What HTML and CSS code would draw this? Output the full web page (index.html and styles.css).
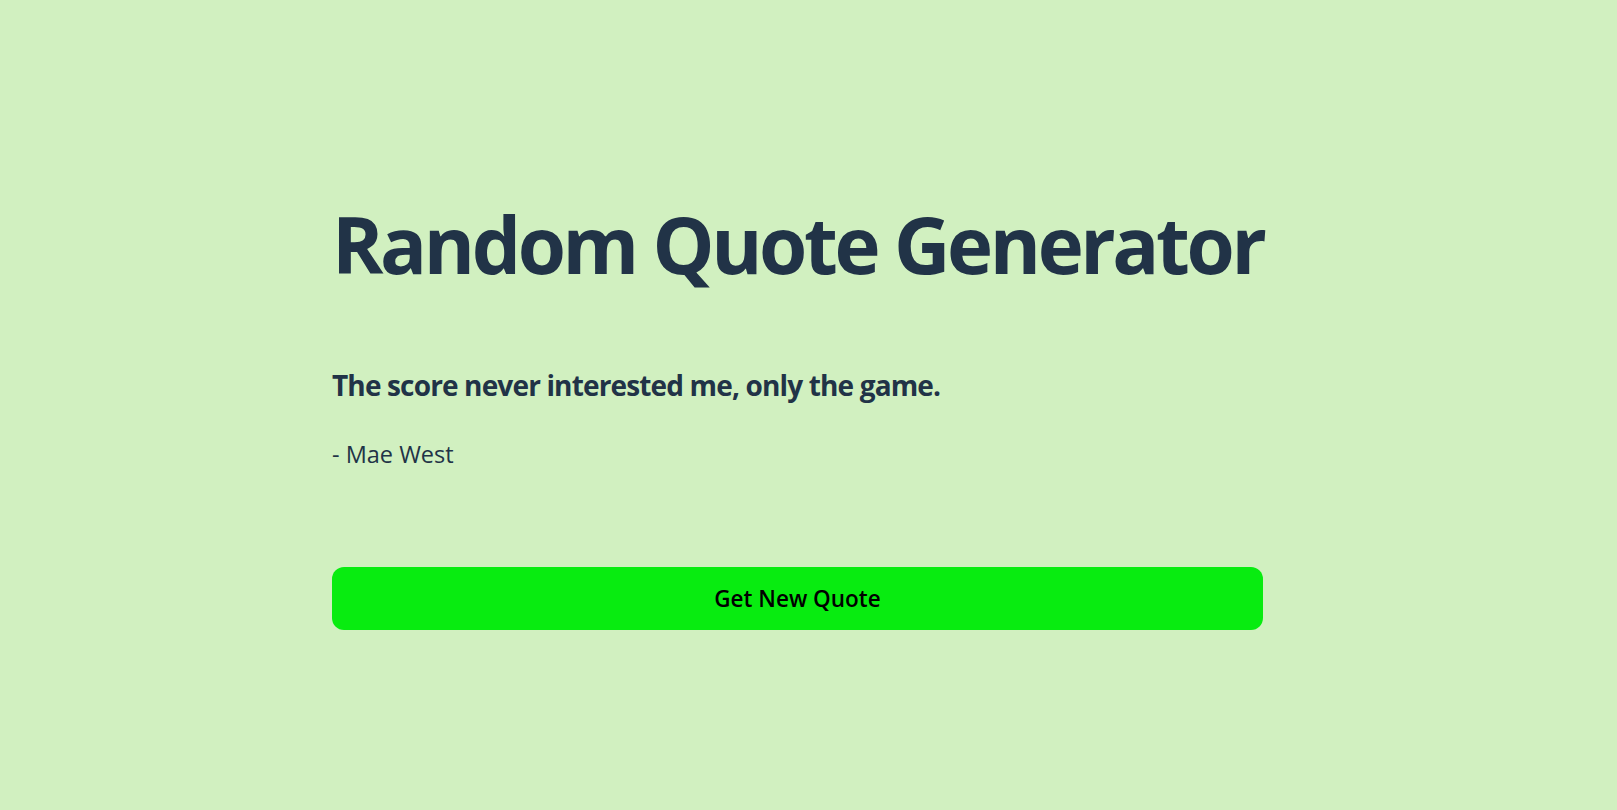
FILE: index.html
```html
<!DOCTYPE html>
<html lang="en">
<head>
<meta charset="utf-8">
<title>Random Quote Generator</title>
<link rel="stylesheet" href="styles.css">
</head>
<body>
<main class="app">
  <h1 class="title">Random Quote Generator</h1>
  <section class="quote-box">
    <p class="quote-text">The score never interested me, only the game.</p>
    <p class="quote-author">- Mae West</p>
  </section>
  <button class="new-quote" type="button">Get New Quote</button>
</main>
</body>
</html>
```

FILE: styles.css
```css
html, body {
  margin: 0;
  padding: 0;
}

body {
  background: #d1f0c0;
  color: #213347;
  font-family: "Open Sans", "Noto Sans", sans-serif;
  min-height: 810px;
}

.app {
  width: 931px;
  margin-left: 332px;
  padding-top: 198px;
  display: flex;
  flex-direction: column;
}

.title {
  margin: 0;
  font-size: 78px;
  line-height: 1.2;
  font-weight: 700;
  letter-spacing: -3.4px;
  white-space: nowrap;
}

.quote-box {
  margin-top: 77px;
  display: flex;
  flex-direction: column;
  gap: 38px;
}

.quote-text {
  margin: 0;
  font-size: 28px;
  line-height: 1.2;
  font-weight: 700;
  letter-spacing: -0.85px;
}

.quote-author {
  margin: 0;
  font-size: 23.5px;
  line-height: 1.2;
  font-weight: 400;
}

.new-quote {
  margin-top: 99px;
  height: 63px;
  border: none;
  border-radius: 12px;
  background: #08ec10;
  color: #000;
  font-family: inherit;
  font-size: 22.5px;
  font-weight: 600;
  cursor: pointer;
}
```
